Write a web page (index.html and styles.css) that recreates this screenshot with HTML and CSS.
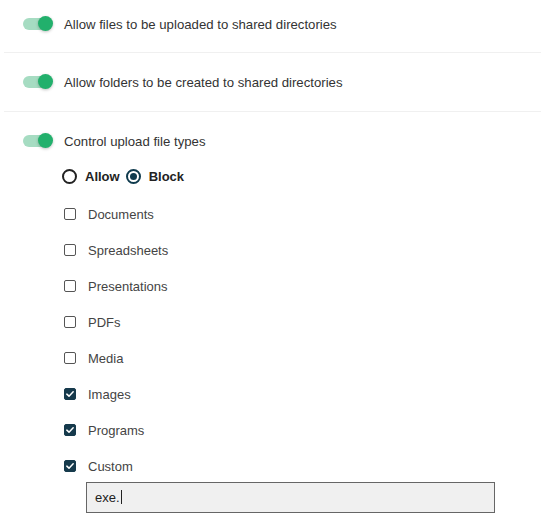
FILE: index.html
```html
<!DOCTYPE html>
<html lang="en">
<head>
    <meta charset="UTF-8">
    <meta name="viewport" content="width=device-width, initial-scale=1.0">
    <title>Upload Settings</title>
    <link rel="stylesheet" href="styles.css">
</head>
<body>

    <div class="settings">
        <div class="setting">
            <label class="toggle">
                <span class="switch on"><span class="thumb"></span></span>
                <span class="toggle-text">Allow files to be uploaded to shared directories</span>
            </label>
        </div>

        <div class="setting">
            <label class="toggle">
                <span class="switch on"><span class="thumb"></span></span>
                <span class="toggle-text">Allow folders to be created to shared directories</span>
            </label>
        </div>

        <div class="setting last">
            <label class="toggle">
                <span class="switch on"><span class="thumb"></span></span>
                <span class="toggle-text">Control upload file types</span>
            </label>

            <div class="options">
                <div class="mode">
                    <label class="radio"><span class="dot"></span>Allow</label>
                    <label class="radio"><span class="dot checked"></span>Block</label>
                </div>

                <div class="types">
                    <label class="check"><span class="box"></span>Documents</label>
                    <label class="check"><span class="box"></span>Spreadsheets</label>
                    <label class="check"><span class="box"></span>Presentations</label>
                    <label class="check"><span class="box"></span>PDFs</label>
                    <label class="check"><span class="box"></span>Media</label>
                    <label class="check"><span class="box checked"><svg viewBox="0 0 12 12" width="10" height="10"><path d="M2.2 6.2 L4.8 8.6 L9.8 3.4" fill="none" stroke="#fff" stroke-width="1.8" stroke-linecap="round" stroke-linejoin="round"/></svg></span>Images</label>
                    <label class="check"><span class="box checked"><svg viewBox="0 0 12 12" width="10" height="10"><path d="M2.2 6.2 L4.8 8.6 L9.8 3.4" fill="none" stroke="#fff" stroke-width="1.8" stroke-linecap="round" stroke-linejoin="round"/></svg></span>Programs</label>
                    <label class="check"><span class="box checked"><svg viewBox="0 0 12 12" width="10" height="10"><path d="M2.2 6.2 L4.8 8.6 L9.8 3.4" fill="none" stroke="#fff" stroke-width="1.8" stroke-linecap="round" stroke-linejoin="round"/></svg></span>Custom</label>
                </div>

                <div class="custom">exe.<span class="caret"></span></div>
            </div>
        </div>
    </div>

</body>
</html>
```

FILE: styles.css
```css
body {
    font-family: "Liberation Sans", Arial, sans-serif;
    font-size: 13px;
    color: #333;
    background-color: #ffffff;
    margin: 0;
    padding: 0;
}

.settings {
    padding-left: 4px;
}

.setting {
    padding: 15px 0;
    border-bottom: 1px solid #f0f0f0;
}

.setting:first-child {
    padding-top: 10px;
    padding-bottom: 14px;
}

.setting.last {
    border-bottom: none;
}

.toggle {
    display: flex;
    align-items: center;
    height: 28px;
    padding-left: 19px;
}

.switch {
    position: relative;
    width: 29px;
    height: 12px;
    border-radius: 6px;
    background-color: #a6dcc2;
    flex-shrink: 0;
}

.switch .thumb {
    position: absolute;
    top: -2px;
    right: -1px;
    width: 15px;
    height: 15px;
    border-radius: 50%;
    background-color: #22b06c;
    box-shadow: 0 1px 3px rgba(0, 0, 0, 0.25);
}

.toggle-text {
    margin-left: 12px;
    font-size: 13.2px;
}

.options {
    padding-left: 58px;
}

.mode {
    display: flex;
    align-items: center;
    height: 28px;
    margin-top: 7px;
    font-weight: bold;
    font-size: 13px;
    color: #222;
}

.radio {
    display: flex;
    align-items: center;
    margin-right: 6px;
}

.dot {
    width: 11px;
    height: 11px;
    border: 2px solid #222;
    border-radius: 50%;
    margin-right: 8px;
    position: relative;
}

.dot.checked {
    border-color: #0f3a4d;
}

.dot.checked::after {
    content: "";
    position: absolute;
    top: 2px;
    left: 2px;
    width: 7px;
    height: 7px;
    border-radius: 50%;
    background-color: #0f3a4d;
}

.types {
    display: flex;
    flex-direction: column;
    gap: 16px;
    margin-top: 14px;
    padding-left: 2px;
}

.check {
    display: flex;
    align-items: center;
    height: 20px;
    color: #444;
}

.box {
    width: 10px;
    height: 10px;
    border: 1.5px solid #555;
    border-radius: 2px;
    margin-right: 12px;
    display: flex;
    align-items: center;
    justify-content: center;
}

.box.checked {
    background-color: #163a4c;
    border-color: #163a4c;
}

.custom {
    margin-top: 6px;
    margin-left: 24px;
    width: 399px;
    height: 29px;
    line-height: 29px;
    padding-left: 8px;
    background-color: #f0f0f0;
    border: 1px solid #666;
    color: #222;
    font-size: 13px;
}

.caret {
    display: inline-block;
    width: 1px;
    height: 14px;
    background-color: #222;
    vertical-align: -2px;
    margin-left: 1px;
}
```
